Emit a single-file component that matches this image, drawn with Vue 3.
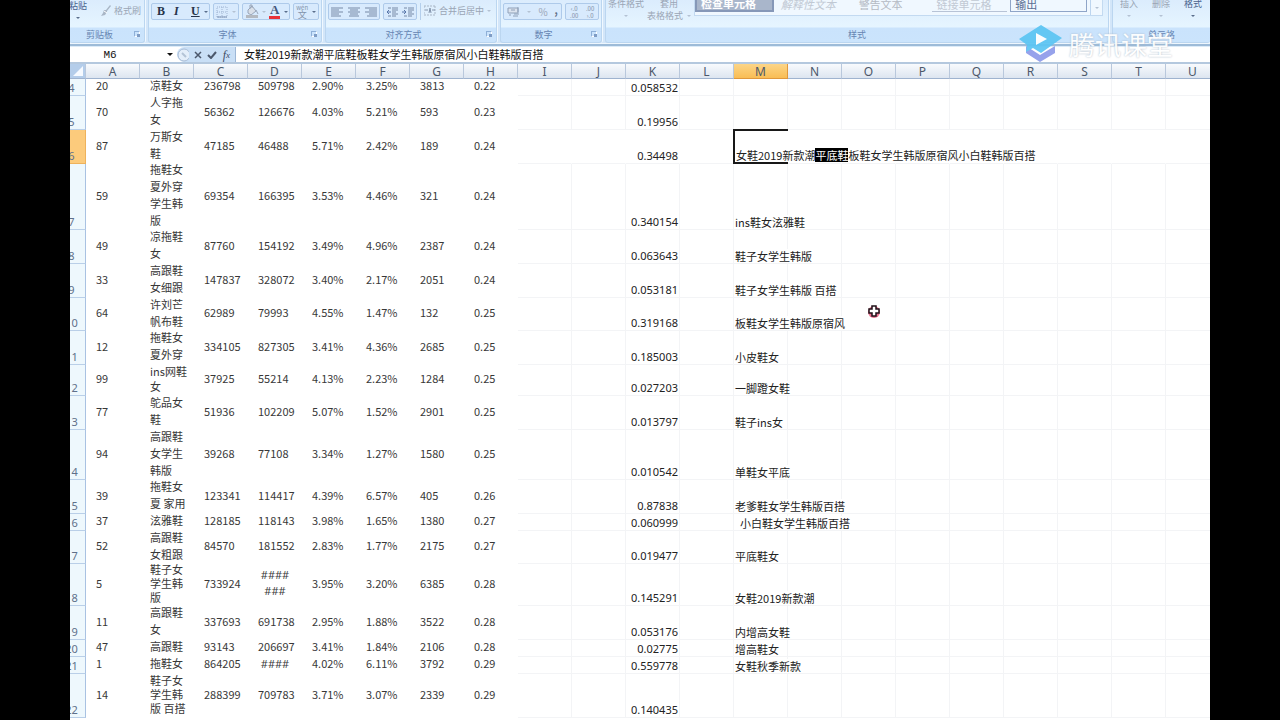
<script setup>
import { ref } from 'vue'

const letters = 'ABCDEFGHIJKLMNOPQRSTU'.split('')
const title = '女鞋2019新款潮平底鞋板鞋女学生韩版原宿风小白鞋韩版百搭'
const formula = ref(title)
const cellName = ref('M6')

const rows = [
  { n: 4, h: 17, d: ['20', '凉鞋女', '236798', '509798', '2.90%', '3.25%', '3813', '0.22'], k: '0.058532', m: '' },
  { n: 5, h: 34, d: ['70', '人字拖\n女', '56362', '126676', '4.03%', '5.21%', '593', '0.23'], k: '0.19956', m: '' },
  { n: 6, h: 34, d: ['87', '万斯女\n鞋', '47185', '46488', '5.71%', '2.42%', '189', '0.24'], k: '0.34498', m: title },
  { n: 7, h: 66, d: ['59', '拖鞋女\n夏外穿\n学生韩\n版', '69354', '166395', '3.53%', '4.46%', '321', '0.24'], k: '0.340154', m: 'ins鞋女泫雅鞋' },
  { n: 8, h: 34, d: ['49', '凉拖鞋\n女', '87760', '154192', '3.49%', '4.96%', '2387', '0.24'], k: '0.063643', m: '鞋子女学生韩版' },
  { n: 9, h: 34, d: ['33', '高跟鞋\n女细跟', '147837', '328072', '3.40%', '2.17%', '2051', '0.24'], k: '0.053181', m: '鞋子女学生韩版 百搭' },
  { n: 10, h: 33, d: ['64', '许刘芒\n帆布鞋', '62989', '79993', '4.55%', '1.47%', '132', '0.25'], k: '0.319168', m: '板鞋女学生韩版原宿风' },
  { n: 11, h: 34, d: ['12', '拖鞋女\n夏外穿', '334105', '827305', '3.41%', '4.36%', '2685', '0.25'], k: '0.185003', m: '小皮鞋女' },
  { n: 12, h: 31, fit: 'snug', d: ['99', 'ins网鞋\n女', '37925', '55214', '4.13%', '2.23%', '1284', '0.25'], k: '0.027203', m: '一脚蹬女鞋' },
  { n: 13, h: 34, d: ['77', '鸵品女\n鞋', '51936', '102209', '5.07%', '1.52%', '2901', '0.25'], k: '0.013797', m: '鞋子ins女' },
  { n: 14, h: 50, d: ['94', '高跟鞋\n女学生\n韩版', '39268', '77108', '3.34%', '1.27%', '1580', '0.25'], k: '0.010542', m: '单鞋女平底' },
  { n: 15, h: 34, d: ['39', '拖鞋女\n夏 家用', '123341', '114417', '4.39%', '6.57%', '405', '0.26'], k: '0.87838', m: '老爹鞋女学生韩版百搭' },
  { n: 16, h: 17, d: ['37', '泫雅鞋', '128185', '118143', '3.98%', '1.65%', '1380', '0.27'], k: '0.060999', m: '  小白鞋女学生韩版百搭' },
  { n: 17, h: 33, d: ['52', '高跟鞋\n女粗跟', '84570', '181552', '2.83%', '1.77%', '2175', '0.27'], k: '0.019477', m: '平底鞋女' },
  { n: 18, h: 42, fit: 'tight', d: ['5', '鞋子女\n学生韩\n版', '733924', '####\n###', '3.95%', '3.20%', '6385', '0.28'], k: '0.145291', m: '女鞋2019新款潮' },
  { n: 19, h: 34, d: ['11', '高跟鞋\n女', '337693', '691738', '2.95%', '1.88%', '3522', '0.28'], k: '0.053176', m: '内增高女鞋' },
  { n: 20, h: 17, d: ['47', '高跟鞋', '93143', '206697', '3.41%', '1.84%', '2106', '0.28'], k: '0.02775', m: '增高鞋女' },
  { n: 21, h: 17, d: ['1', '拖鞋女', '864205', '####', '4.02%', '6.11%', '3792', '0.29'], k: '0.559778', m: '女鞋秋季新款' },
  { n: 22, h: 44, fit: 'tight', d: ['14', '鞋子女\n学生韩\n版 百搭', '288399', '709783', '3.71%', '3.07%', '2339', '0.29'], k: '0.140435', m: '' }
]
const tail = ['N', 'O', 'P', 'Q', 'R', 'S', 'T', 'U']
</script>

<template>
  <div class="screen">
    <main class="window">
      <div class="ribbon">
        <section class="group clip">
          <div class="body">
            <button class="stack dark paste">粘贴<i class="arrow"></i></button>
            <button class="tool brush">
              <svg width="10" height="12" viewBox="0 0 10 12"><path d="M9 0 5 5 3 5 2 8 0 11 4 10 6 7 6 6 10 1Z" fill="#a9b6c6" /><path d="M3 6 6 8" stroke="#fff" /></svg>
              格式刷
            </button>
          </div>
          <div class="label">剪贴板<i class="launch"></i></div>
        </section>

        <section class="group font">
          <div class="body">
            <div class="box">
              <button class="letter bold" aria-label="加粗">B</button>
              <button class="letter ital" aria-label="倾斜">I</button>
              <button class="letter under" aria-label="下划线">U</button>
              <i class="arrow"></i>
            </div>
            <div class="box pale">
              <button aria-label="边框"><svg width="12" height="12" viewBox="0 0 12 12"><path d="M1 1H11V11H1ZM6 1V11M1 6H11" fill="none" stroke="#9fb4d2" stroke-dasharray="1 1" /><path d="M1 11H11" stroke="#8095b5" /></svg></button>
              <i class="arrow light"></i>
            </div>
            <div class="box">
              <button aria-label="填充颜色"><svg width="14" height="15" viewBox="0 0 14 15"><path d="M3 6 7 2 11 7 6 11 3 9Z" fill="#d9dfe8" stroke="#98a5b8" /><path d="M5 5V1H7V4" fill="none" stroke="#98a5b8" /><path d="M11 6 13 10" stroke="#98a5b8" /><path d="M1 11H13V14H1Z" fill="#b4b9c0" /></svg></button>
              <i class="arrow light"></i>
              <button aria-label="字体颜色" class="fontcolor">A</button>
              <i class="arrow"></i>
            </div>
            <div class="box">
              <button aria-label="拼音" class="pinyin"><small>wén</small><span>文</span></button>
              <i class="arrow"></i>
            </div>
          </div>
          <div class="label">字体<i class="launch"></i></div>
        </section>

        <section class="group align">
          <div class="body">
            <div class="box three">
              <button aria-label="左对齐"><svg width="12" height="10" viewBox="0 0 12 10"><path d="M0 1H12M0 3H8M0 5H12M0 7H8M0 9H10" stroke="#7689a6" /></svg></button>
              <button aria-label="居中"><svg width="12" height="10" viewBox="0 0 12 10"><path d="M0 1H12M2 3H10M0 5H12M2 7H10M1 9H11" stroke="#7689a6" /></svg></button>
              <button aria-label="右对齐"><svg width="12" height="10" viewBox="0 0 12 10"><path d="M0 1H12M4 3H12M0 5H12M4 7H12M2 9H12" stroke="#7689a6" /></svg></button>
            </div>
            <div class="box two">
              <button aria-label="减少缩进量"><svg width="12" height="10" viewBox="0 0 12 10"><path d="M2 1H5M6 1H12M6 3H12M6 5H10M6 7H12M2 9H5M6 9H10" stroke="#7689a6" /><path d="M5 5H1M3 3 1 5 3 7" fill="none" stroke="#5977aa" /></svg></button>
              <button aria-label="增加缩进量"><svg width="12" height="10" viewBox="0 0 12 10"><path d="M2 1H5M6 1H12M6 3H12M6 5H10M6 7H12M2 9H5M6 9H10" stroke="#7689a6" /><path d="M0 5H4M2 3 4 5 2 7" fill="none" stroke="#5977aa" /></svg></button>
            </div>
            <i class="rule"></i>
            <button class="tool">
              <svg width="12" height="11" viewBox="0 0 12 11"><path d="M0 1H12M0 10H12M0 1V10M11 1V10" fill="none" stroke="#a9b6c6" stroke-dasharray="2 1" /><path d="M1 5H4M11 5H8" stroke="#8596ae" /><path d="M5 8 6 3 7 8M5 6H7" fill="none" stroke="#8596ae" /></svg>
              合并后居中
            </button>
            <i class="arrow light"></i>
          </div>
          <div class="label">对齐方式<i class="launch"></i></div>
        </section>

        <section class="group number">
          <div class="body">
            <div class="box wide">
              <button aria-label="会计数字格式"><svg width="13" height="12" viewBox="0 0 13 12"><path d="M1 2H11V7H1Z" fill="#dbe3ee" stroke="#8fa0b8" /><path d="M4 4H8M7 8H12M6 10H11M11 1V6M2 9H4" stroke="#8fa0b8" /></svg></button>
              <i class="arrow light"></i>
              <button class="glyph">%</button>
              <button class="glyph comma">,</button>
            </div>
            <div class="box two">
              <button class="dec" aria-label="增加小数位数"><span>‹.0</span><span>.00</span></button>
              <button class="dec" aria-label="减少小数位数"><span>.00</span><span>›.0</span></button>
            </div>
          </div>
          <div class="label">数字<i class="launch"></i></div>
        </section>

        <section class="group styles">
          <div class="body">
            <button class="stack">条件格式<i class="arrow light"></i></button>
            <button class="stack">套用<span>表格格式<i class="arrow light"></i></span></button>
            <div class="gallery">
              <button class="style check">检查单元格</button>
              <button class="style explain">解释性文本</button>
              <button class="style warn">警告文本</button>
              <button class="style linked">链接单元格</button>
              <button class="style output">输出</button>
              <button class="more" aria-label="其他样式"><i class="arrow light"></i></button>
            </div>
          </div>
          <div class="label">样式</div>
        </section>

        <section class="group cells">
          <div class="body">
            <button class="stack">插入<i class="arrow light"></i></button>
            <button class="stack">删除<i class="arrow light"></i></button>
            <button class="stack dark">格式<i class="arrow"></i></button>
          </div>
          <div class="label">单元格</div>
        </section>
      </div>

      <div class="formula">
        <input v-model="cellName" class="name" aria-label="名称框" />
        <i class="arrow black"></i>
        <div class="actions">
          <svg width="12" height="14" viewBox="0 0 12 14"><circle cx="7" cy="7" r="6" fill="#e4eefa" stroke="#a9bdd6" /><path d="M5 5 9 9" stroke="#b4c3d6" stroke-width="2" /></svg>
          <button aria-label="取消"><svg width="8" height="8" viewBox="0 0 8 8"><path d="M1 1 7 7M7 1 1 7" stroke="#4c586c" stroke-width="1.5" /></svg></button>
          <button aria-label="输入"><svg width="10" height="8" viewBox="0 0 10 8"><path d="M1 4 4 7 9 1" fill="none" stroke="#4c586c" stroke-width="2" /></svg></button>
          <button class="fx" aria-label="插入函数">f<small>x</small></button>
        </div>
        <input v-model="formula" class="edit" aria-label="编辑栏" />
      </div>

      <div class="sheet">
        <table>
          <colgroup><col class="c-num" /><col v-for="l in letters" :key="l" class="c-data" /></colgroup>
          <thead>
            <tr>
              <th class="corner"><svg width="11" height="11" viewBox="0 0 11 11"><path d="M10 0V10H0Z" fill="#f6faff" /></svg></th>
              <th v-for="l in letters" :key="l" scope="col" :class="{ on: l === 'M' }">{{ l }}</th>
            </tr>
          </thead>
          <tbody>
            <tr v-for="r in rows" :key="r.n" :class="[r.fit, { active: r.n === 6 }]" :style="{ height: r.h + 'px' }">
              <th scope="row">{{ r.n }}</th>
              <td v-for="(v, i) in r.d" :key="i" class="d" :class="{ hash: v.startsWith('#') }"><div>{{ v }}</div></td>
              <td class="g"></td>
              <td class="g"></td>
              <td class="g k">{{ r.k }}</td>
              <td class="g"></td>
              <td class="g m">
                <span v-if="r.n === 6" class="text">女鞋2019新款潮<mark>平底鞋</mark>板鞋女学生韩版原宿风小白鞋韩版百搭</span>
                <span v-else-if="r.m" class="text">{{ r.m }}</span>
              </td>
              <td v-for="l in tail" :key="l" class="g"></td>
            </tr>
          </tbody>
        </table>
      </div>

      <div class="mark">
        <svg width="46" height="40" viewBox="0 0 46 40">
          <path d="M8 22 22 31 37 22V29L22 38 8 29Z" fill="#8f9bea" />
          <path d="M1 15 23 1 44 14 23 29 15 24 8 28 9 21Z" fill="#5cc5f3" />
          <path d="M18 9 29 15 18 21Z" fill="#fff" />
        </svg>
        <span>腾讯课堂</span>
      </div>
      <svg class="pointer" width="14" height="14" viewBox="0 0 14 14"><circle cx="7" cy="8" r="6" fill="#e0436a" opacity=".75" /><path d="M5 2H9V5H12V9H9V12H5V9H2V5H5Z" fill="#fff" stroke="#201018" stroke-width="1.5" /></svg>
    </main>
  </div>
</template>

<style>
body { background: #000; }
</style>

<style scoped>
* { box-sizing: border-box; }
.screen {
  height: 100vh;
  padding: 0 70px;
  overflow: hidden;
  background: #000;
  font-family: "Noto Sans CJK SC", "Noto Sans", sans-serif;
  font-size: 11px;
}
.window {
  position: relative;
  display: flex;
  flex-direction: column;
  height: 100%;
  overflow: hidden;
  background: #fff;
}
button {
  display: inline-flex;
  align-items: center;
  justify-content: center;
  margin: 0;
  padding: 0;
  border: 0;
  background: none;
  color: #9aa5b5;
  font: inherit;
  white-space: nowrap;
}
svg { display: block; flex: none; }

.ribbon {
  display: flex;
  flex: none;
  gap: 3px;
  height: 47px;
  padding-bottom: 4px;
  overflow: hidden;
  background: linear-gradient(#d3e6f9 0 43px, #eef6fd 43px 44px, #9dbbd8 44px 46px, #dcebf8 46px);
  font-size: 9px;
}
.group {
  display: flex;
  flex: none;
  flex-direction: column;
  border: 1px solid #bbd6f0;
  border-top: 0;
  border-radius: 0 0 3px 3px;
  background: linear-gradient(#dbecfd, #e6f5ff 27px, #cae3fc 28px, #cbe4fc);
  box-shadow: 1px 0 #f0f8ff;
}
.clip { width: 75px; border-left: 0; }
.font { width: 174px; }
.align { width: 172px; }
.number { width: 102px; }
.styles { flex: 1; }
.cells { width: 98px; border-right: 0; }
.body {
  display: flex;
  align-items: flex-start;
  height: 28px;
  padding: 3px 2px 0;
  gap: 3px;
}
.label {
  position: relative;
  height: 14px;
  color: #6685b2;
  line-height: 14px;
  text-align: center;
}
.clip .label, .font .label, .align .label, .number .label { padding-right: 15px; }
.launch {
  position: absolute;
  top: 3px;
  right: 4px;
  width: 6px;
  height: 6px;
  border: 1px solid #8fb0d8;
  border-right-color: #fff;
  border-bottom-color: #fff;
}
.launch::after {
  content: "";
  position: absolute;
  right: -1px;
  bottom: -1px;
  width: 3px;
  height: 3px;
  background: #7f9cc4;
}
.arrow {
  flex: none;
  width: 0;
  height: 0;
  border: 2px solid transparent;
  border-top-color: #5a6e8c;
  border-bottom: 0;
}
.arrow.light { border-top-color: #b4c2d3; }
.arrow.black { border-width: 3px; border-bottom: 0; border-top-color: #111; }
.box {
  display: flex;
  align-items: center;
  justify-content: space-around;
  height: 17px;
  border: 1px solid #aecaea;
  border-radius: 2px;
  background: #d8eafd;
}
.font .box:nth-child(1) { width: 60px; justify-content: flex-start; padding-left: 5px; }
.font .box:nth-child(2) { width: 26px; }
.font .box:nth-child(3) { width: 49px; }
.font .box:nth-child(4) { width: 26px; }
.box.three { width: 52px; }
.box.two { width: 34px; }
.box.wide { width: 60px; }
.letter {
  width: 17px;
  justify-content: flex-start;
  color: #253349;
  font-family: "Liberation Serif", serif;
  font-size: 12px;
  font-weight: bold;
}
.ital { font-style: italic; }
.under { width: 13px; text-decoration: underline; }
.fontcolor {
  height: 14px;
  padding: 0 1px;
  border-bottom: 3px solid #e83038;
  color: #44587c;
  font-family: "Liberation Serif", serif;
  font-size: 13px;
  font-weight: bold;
  line-height: 10px;
}
.pinyin { flex-direction: column; color: #8292aa; line-height: 8px; }
.pinyin small { font-size: 6px; line-height: 6px; }
.glyph { font-size: 10px; }
.comma { margin-bottom: 4px; font-weight: bold; color: #5f7088; }
.dec { flex-direction: column; font-size: 6px; line-height: 7px; color: #7d8ca2; }
.rule { width: 1px; height: 17px; background: #b4cfec; }
.tool { gap: 3px; height: 15px; }
.align .arrow.light { margin-top: 7px; }
.clip .body { padding-left: 0; gap: 14px; }
.stack {
  flex-direction: column;
  justify-content: flex-start;
  gap: 4px;
  margin-top: -6px;
  line-height: 14px;
}
.stack span { display: flex; align-items: center; gap: 4px; margin-top: -6px; }
.stack.dark { color: #48618c; }
.paste { margin-top: -4px; margin-left: -1px; gap: 4px; }
.styles .body { padding: 3px 5px 0 2px; gap: 3px; }
.gallery {
  display: flex;
  flex: 1;
  align-items: flex-start;
  gap: 3px;
  height: 16px;
  margin-top: -3px;
  border: 1px solid #c3daf1;
  border-top: 0;
  background: #f0f8ff;
}
.style {
  flex: 1;
  justify-content: flex-start;
  height: 12px;
  padding: 0 0 4px 4px;
  font-size: 11px;
  line-height: 8px;
  color: #b4bac3;
}
.check { border: 2px solid #8698b8; border-top: 0; background: #a9b6cb; color: #fff; font-weight: bold; }
.explain { font-style: italic; color: #c1c9d4; }
.linked { border-bottom: 1px solid #b7c3d6; color: #c1c9d4; }
.output { border: 1px solid #8fa5c8; border-top: 0; color: #5c6e92; }
.more { width: 12px; height: 15px; border-left: 1px solid #bcd5ef; }
.cells .body { padding: 3px 7px 0; gap: 14px; }

.formula {
  display: flex;
  flex: none;
  align-items: flex-start;
  height: 17px;
  border-bottom: 2px solid #b4c8de;
  background: #fff;
}
.formula input {
  min-width: 0;
  height: 14px;
  margin: 0;
  padding: 0;
  border: 0;
  outline: 0;
  background: #fff;
  color: #111;
  font: inherit;
}
.formula .name { width: 97px; padding: 1px 17px 0 0; font-family: "Liberation Mono", monospace; font-size: 11px; text-align: center; }
.formula .edit { flex: 1; padding-left: 8px; }
.formula .arrow { margin-top: 6px; }
.actions {
  display: flex;
  align-items: center;
  justify-content: space-between;
  width: 59px;
  height: 15px;
  margin-left: 4px;
  padding-right: 5px;
  border-right: 1px solid #9db7d6;
  border-radius: 8px 0 0 8px;
  background: #c9dff6;
}
.fx { color: #3c4a62; font-family: "Liberation Serif", serif; font-size: 12px; font-style: italic; line-height: 12px; }
.fx small { font-size: 9px; }

.sheet { flex: 1; min-height: 0; overflow: hidden; }
table {
  width: 1162px;
  margin-left: -12px;
  border-collapse: separate;
  border-spacing: 0;
  table-layout: fixed;
}
.c-num { width: 28px; }
.c-data { width: 54px; }
th, td { padding: 0; }
thead th {
  height: 15px;
  padding-top: 1px;
  border-right: 1px solid #b9c8dc;
  border-bottom: 1px solid #9fb3cf;
  background: linear-gradient(#f8fafd, #dde5f0);
  color: #4c586a;
  font: 12px/13px "Noto Sans", sans-serif;
}
thead .corner { background: #b4cdea; }
.corner svg { margin-left: 15px; }
thead th.on { border-color: #e0983c; background: linear-gradient(#fcd587, #f9bd55); }
tbody th {
  border-right: 1px solid #a9c2e2;
  border-bottom: 1px solid #b9cfe8;
  background: #eef8fd;
  color: #60708a;
  font: 11px/14px "Noto Sans", sans-serif;
  text-align: center;
  vertical-align: bottom;
}
.active th { border-color: #eeb25c; background: #fccb7c; }
.d {
  padding-left: 10px;
  color: #383838;
  line-height: 17px;
  vertical-align: middle;
  white-space: pre;
}
.d div { margin: -3px 0 1px; }
.d.hash { padding: 0; text-align: center; font-family: "Open Sans", sans-serif; }
.snug .d { line-height: 15px; }
.tight .d { line-height: 14px; }
.tight .d.hash { line-height: 16px; }
.g {
  position: relative;
  border-right: 1px solid #f3f4f6;
  border-bottom: 1px solid #f3f4f6;
  color: #222;
  line-height: 14px;
  vertical-align: bottom;
  white-space: pre;
}
.g.k { padding-right: 1px; text-align: right; font-family: "Noto Sans", sans-serif; }
.active .g { border-right-color: #fff; }
.text {
  position: absolute;
  z-index: 1;
  left: 1px;
  bottom: 0;
  background: #fff;
  line-height: 14px;
}
.active .text { bottom: 1px; left: 2px; }
.active .m::before {
  content: "";
  position: absolute;
  z-index: 2;
  inset: -1px;
  border: 2px solid #181818;
  border-right: 0;
  pointer-events: none;
}
mark { display: inline-block; background: #000; color: #fff; }

.mark {
  position: absolute;
  top: 24px;
  right: 37px;
  display: flex;
  align-items: center;
  gap: 5px;
  color: #fff;
  font-size: 26px;
  line-height: 38px;
  text-shadow: 0 0 2px #a3b4c6;
  opacity: .93;
}
.pointer { position: absolute; top: 304px; left: 797px; }
</style>
